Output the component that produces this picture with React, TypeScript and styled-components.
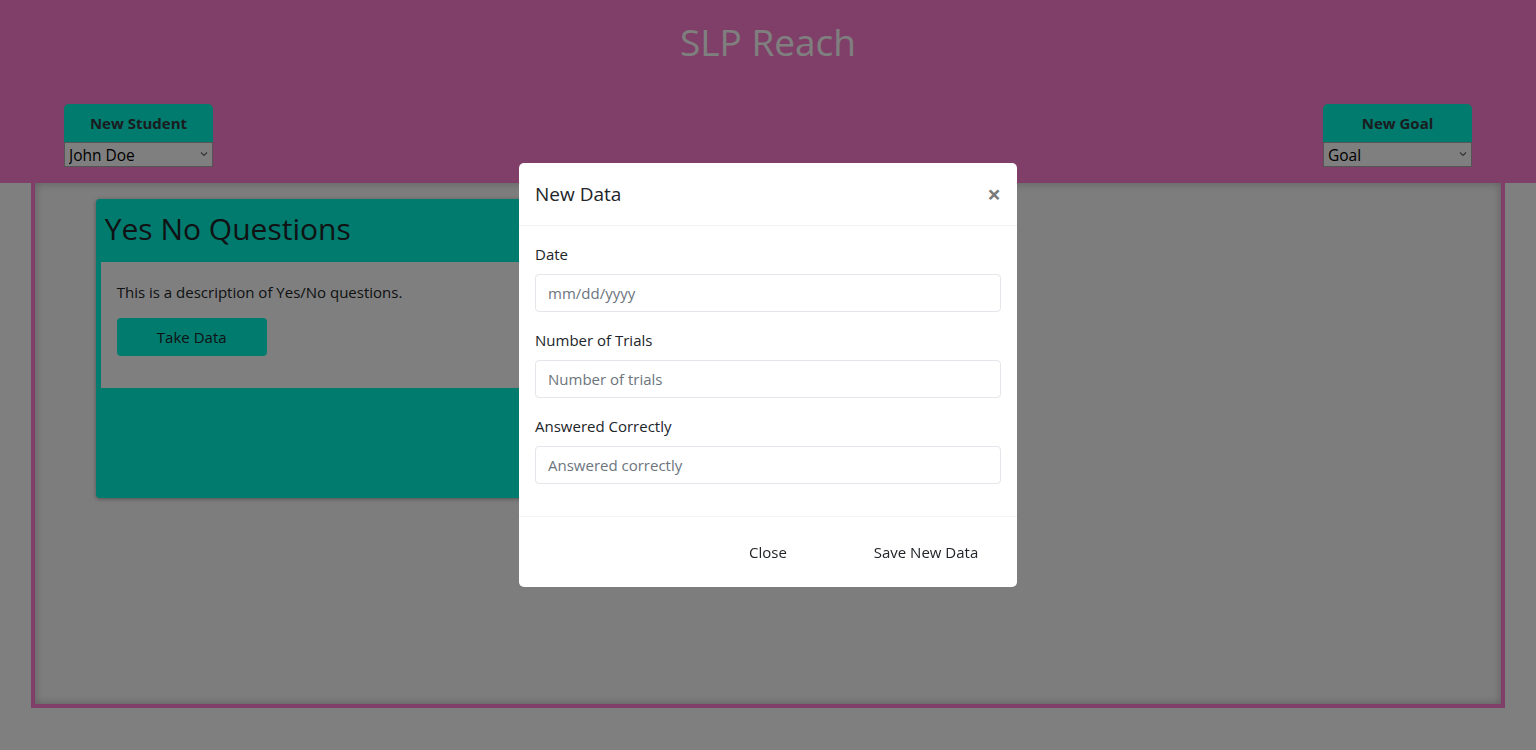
import React from "react";
import styled, { createGlobalStyle } from "styled-components";

const Global = createGlobalStyle`
  html, body { margin: 0; padding: 0; background: #ffffff; }
  body {
    font-family: "Open Sans", "Noto Sans", "Liberation Sans", sans-serif;
    color: #212529;
    font-size: 16px;
    line-height: 1.5;
  }
  * { box-sizing: border-box; }
`;

const PINK = "#ff7ed0";
const TEAL = "#00f6dc";

const Page = styled.div`
  min-height: 750px;
  position: relative;
`;

const Header = styled.header`
  background: ${PINK};
  height: 183px;
  display: flex;
  flex-direction: column;
`;

const Title = styled.h1`
  margin: 0;
  padding-top: 16px;
  text-align: center;
  color: #ffffff;
  font-size: 37px;
  font-weight: 400;
  line-height: 52px;
`;

const Toolbar = styled.div`
  display: flex;
  justify-content: space-between;
  padding: 36px 64px 0 64px;
`;

const PickerGroup = styled.div`
  display: flex;
  flex-direction: column;
  width: 149px;
`;

const AddButton = styled.button`
  height: 38px;
  border: none;
  border-radius: 5px 5px 0 0;
  background: ${TEAL};
  color: #343a40;
  font-family: inherit;
  font-weight: 700;
  font-size: 15px;
  padding: 0;
`;

const SelectWrap = styled.div`
  position: relative;
  height: 25px;
`;

const Select = styled.select`
  appearance: none;
  -webkit-appearance: none;
  width: 100%;
  height: 25px;
  border: 1px solid #aaaaaa;
  background: #ffffff;
  color: #000;
  font-family: inherit;
  font-size: 15.5px;
  padding: 0 18px 0 4px;
  border-radius: 0;
  outline: none;
`;

const Chevron = styled.svg`
  position: absolute;
  right: 5px;
  top: 9px;
  width: 8px;
  height: 6px;
  pointer-events: none;
`;

const Main = styled.main`
  width: 96%;
  margin: 0 auto;
  height: 525px;
  background: #f8faf8;
  border: 4px solid ${PINK};
  border-top: none;
  box-shadow: inset 0 0 8px rgba(0, 0, 0, 0.25);
  padding: 16px 61px;
`;

const Card = styled.section`
  width: 450px;
  height: 299px;
  background: ${TEAL};
  border-radius: 4px;
  box-shadow: 0 1px 4px rgba(0, 0, 0, 0.35);
  display: flex;
  flex-direction: column;
`;

const CardTitle = styled.h2`
  margin: 0;
  height: 63px;
  padding: 6px 9px 0;
  font-size: 30px;
  font-weight: 400;
  line-height: 48px;
  color: #212529;
`;

const CardBody = styled.div`
  margin-left: 5px;
  background: #ffffff;
  padding: 18px 16px 32px;
`;

const CardText = styled.p`
  margin: 0 0 14px;
  font-size: 15px;
  line-height: 24px;
`;

const TakeButton = styled.button`
  width: 150px;
  height: 38px;
  border: none;
  border-radius: 4px;
  background: ${TEAL};
  color: #212529;
  font-family: inherit;
  font-size: 15px;
`;

const Backdrop = styled.div`
  position: fixed;
  inset: 0;
  background: rgba(0, 0, 0, 0.5);
  display: flex;
  align-items: center;
  justify-content: center;
`;

const Modal = styled.div`
  width: 498px;
  background: #ffffff;
  border-radius: 5px;
  display: flex;
  flex-direction: column;
`;

const ModalHeader = styled.div`
  display: flex;
  align-items: center;
  justify-content: space-between;
  padding: 16px;
  border-bottom: 1px solid #f1f2f4;
`;

const ModalTitle = styled.h5`
  margin: 0;
  font-size: 19px;
  font-weight: 400;
  line-height: 30px;
  color: #212529;
`;

const CloseX = styled.span`
  font-size: 24px;
  font-weight: 700;
  line-height: 1;
  color: #7a7a7a;
`;

const ModalBody = styled.div`
  padding: 16px 16px 32px;
  display: flex;
  flex-direction: column;
  gap: 16px;
`;

const Field = styled.div`
  display: flex;
  flex-direction: column;
`;

const Label = styled.label`
  font-size: 15px;
  line-height: 24px;
  margin-bottom: 8px;
`;

const Input = styled.input`
  height: 38px;
  border: 1px solid #e3e6ea;
  border-radius: 4px;
  padding: 6px 12px;
  font-family: inherit;
  font-size: 15px;
  color: #495057;
  &::placeholder { color: #6c757d; }
`;

const ModalFooter = styled.div`
  border-top: 1px solid #f3f4f5;
  padding: 12px;
  display: flex;
  justify-content: flex-end;
`;

const FooterButton = styled.button`
  width: 150px;
  height: 38px;
  margin: 4px;
  border: none;
  background: #ffffff;
  color: #212529;
  font-family: inherit;
  font-size: 15px;
`;

function Picker({ label, value }: { label: string; value: string }) {
  return (
    <PickerGroup>
      <AddButton>{label}</AddButton>
      <SelectWrap>
        <Select defaultValue={value}>
          <option>{value}</option>
        </Select>
        <Chevron viewBox="0 0 8 6">
          <path d="M1 1.5 L4 4.5 L7 1.5" stroke="#6b6b6b" strokeWidth="1.2" fill="none" />
        </Chevron>
      </SelectWrap>
    </PickerGroup>
  );
}

export default function App() {
  return (
    <Page>
      <Global />
      <Header>
        <Title>SLP Reach</Title>
        <Toolbar>
          <Picker label="New Student" value="John Doe" />
          <Picker label="New Goal" value="Goal" />
        </Toolbar>
      </Header>
      <Main>
        <Card>
          <CardTitle>Yes No Questions</CardTitle>
          <CardBody>
            <CardText>This is a description of Yes/No questions.</CardText>
            <TakeButton>Take Data</TakeButton>
          </CardBody>
        </Card>
      </Main>
      <Backdrop>
        <Modal>
          <ModalHeader>
            <ModalTitle>New Data</ModalTitle>
            <CloseX>×</CloseX>
          </ModalHeader>
          <ModalBody>
            <Field>
              <Label>Date</Label>
              <Input placeholder="mm/dd/yyyy" />
            </Field>
            <Field>
              <Label>Number of Trials</Label>
              <Input placeholder="Number of trials" />
            </Field>
            <Field>
              <Label>Answered Correctly</Label>
              <Input placeholder="Answered correctly" />
            </Field>
          </ModalBody>
          <ModalFooter>
            <FooterButton>Close</FooterButton>
            <FooterButton>Save New Data</FooterButton>
          </ModalFooter>
        </Modal>
      </Backdrop>
    </Page>
  );
}
